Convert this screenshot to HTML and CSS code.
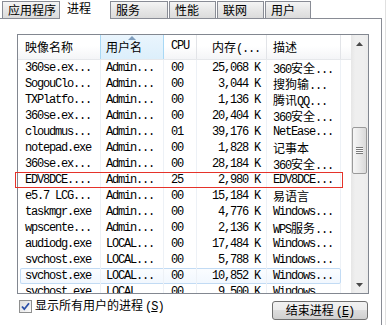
FILE: index.html
```html
<!DOCTYPE html>
<html lang="zh-CN">
<head>
<meta charset="utf-8">
<title>任务管理器 - 进程</title>
<link rel="stylesheet" href="styles.css">
</head>
<body>
<div class="window">
  <div class="tabs">
    <div class="tab t1">应用程序</div>
    <div class="tab active">进程</div>
    <div class="tab t3">服务</div>
    <div class="tab t4">性能</div>
    <div class="tab t5">联网</div>
    <div class="tab t6">用户</div>
  </div>
  <div class="panel">
    <div class="listview">
      <div class="lv-main">
        <div class="header">
          <div class="hc c1 pre">映像名称</div>
          <div class="hc c2 sorted"><span class="sort-arrow"></span>用户名</div>
          <div class="hc c3 mono">CPU</div>
          <div class="hc c4">内存<span class="mono">(...</span></div>
          <div class="hc c5">描述</div>
          <div class="hc cf"></div>
        </div>
        <div class="rows">
          <div class="row"><div class="c1">360se.ex...</div><div class="c2">Admin...</div><div class="c3">00</div><div class="c4">25,068 K</div><div class="c5">360<span class="cjk">安全</span>...</div></div>
          <div class="row"><div class="c1">SogouClo...</div><div class="c2">Admin...</div><div class="c3">00</div><div class="c4">3,044 K</div><div class="c5"><span class="cjk">搜狗输</span>...</div></div>
          <div class="row"><div class="c1">TXPlatfo...</div><div class="c2">Admin...</div><div class="c3">00</div><div class="c4">1,136 K</div><div class="c5"><span class="cjk">腾讯</span>QQ...</div></div>
          <div class="row"><div class="c1">360se.ex...</div><div class="c2">Admin...</div><div class="c3">00</div><div class="c4">20,404 K</div><div class="c5">360<span class="cjk">安全</span>...</div></div>
          <div class="row"><div class="c1">cloudmus...</div><div class="c2">Admin...</div><div class="c3">01</div><div class="c4">39,176 K</div><div class="c5">NetEase...</div></div>
          <div class="row"><div class="c1">notepad.exe</div><div class="c2">Admin...</div><div class="c3">00</div><div class="c4">1,828 K</div><div class="c5"><span class="cjk">记事本</span></div></div>
          <div class="row"><div class="c1">360se.ex...</div><div class="c2">Admin...</div><div class="c3">00</div><div class="c4">28,184 K</div><div class="c5">360<span class="cjk">安全</span>...</div></div>
          <div class="row"><div class="c1">EDV8DCE....</div><div class="c2">Admin...</div><div class="c3">25</div><div class="c4">2,980 K</div><div class="c5">EDV8DCE...</div></div>
          <div class="row"><div class="c1">e5.7 LCG...</div><div class="c2">Admin...</div><div class="c3">00</div><div class="c4">15,184 K</div><div class="c5"><span class="cjk">易语言</span></div></div>
          <div class="row"><div class="c1">taskmgr.exe</div><div class="c2">Admin...</div><div class="c3">00</div><div class="c4">4,776 K</div><div class="c5">Windows...</div></div>
          <div class="row"><div class="c1">wpscente...</div><div class="c2">Admin...</div><div class="c3">00</div><div class="c4">2,136 K</div><div class="c5">WPS<span class="cjk">服务</span>...</div></div>
          <div class="row"><div class="c1">audiodg.exe</div><div class="c2">LOCAL...</div><div class="c3">00</div><div class="c4">17,484 K</div><div class="c5">Windows...</div></div>
          <div class="row"><div class="c1">svchost.exe</div><div class="c2">LOCAL...</div><div class="c3">00</div><div class="c4">5,788 K</div><div class="c5">Windows...</div></div>
          <div class="row sel"><div class="c1">svchost.exe</div><div class="c2">LOCAL...</div><div class="c3">00</div><div class="c4">10,852 K</div><div class="c5">Windows...</div></div>
          <div class="row"><div class="c1">svchost.exe</div><div class="c2">LOCAL...</div><div class="c3">00</div><div class="c4">9,500 K</div><div class="c5">Windows...</div></div>
        </div>
      </div>
      <div class="vscroll">
        <div class="sb-btn"><svg width="7" height="4" viewBox="0 0 7 4"><path d="M3.5 0 L7 4 L0 4 Z" fill="#4a4a4a"/></svg></div>
        <div class="sb-track"><div class="thumb"><div class="grip"></div></div></div>
        <div class="sb-btn"><svg width="7" height="4" viewBox="0 0 7 4"><path d="M0 0 L7 0 L3.5 4 Z" fill="#4a4a4a"/></svg></div>
      </div>
    </div>
    <div class="bottom">
      <label class="chk">
        <span class="box"><svg width="11" height="11" viewBox="0 0 11 11"><path d="M2 5.5 L4.3 8.2 L9 2.2" fill="none" stroke="#2a4fa8" stroke-width="1.8"/></svg></span>
        <span class="chk-text">显示所有用户的进程<span class="acc">(<u>S</u>)</span></span>
      </label>
      <button class="btn">结束进程<span class="acc">(<u>E</u>)</span></button>
    </div>
    <div class="redbox"></div>
  </div>
</div>
</body>
</html>
```
FILE: styles.css
```css
* { box-sizing: border-box; }
body {
  margin: 0;
  width: 388px;
  height: 325px;
  overflow: hidden;
  background: #fff;
  color: #000;
  font-family: "Noto Sans CJK SC", sans-serif;
  font-size: 12px;
}
.window {
  width: 386px;
  height: 325px;
  border-right: 1px solid #e0e0e0;
}
.tabs {
  display: flex;
  align-items: flex-end;
  gap: 1px;
  height: 18px;
  padding-left: 2px;
  position: relative;
  z-index: 1;
}
.tab {
  height: 17px;
  border: 1px solid #898c95;
  border-bottom: none;
  background: linear-gradient(#f5f5f5, #e8e8e8 45%, #dbdbdb);
  padding-left: 5px;
  line-height: 15px;
  white-space: nowrap;
}
.t1 { width: 58px; }
.t3 { width: 58px; }
.t4 { width: 47px; }
.t5 { width: 47px; }
.t6 { width: 46px; }
.tab.active {
  width: 50px;
  height: 19px;
  margin: 0 -1px -1px -1px;
  border: none;
  background: #fff;
  padding-left: 7px;
  line-height: 16px;
}
.panel {
  position: relative;
  width: 382px;
  height: 307px;
  border-top: 1px solid #898c95;
  border-right: 1px solid #898c95;
  padding: 15px 0 0 17px;
}
.listview {
  display: flex;
  width: 352px;
  height: 260px;
  border: 1px solid #828790;
}
.lv-main {
  width: 333px;
  overflow: hidden;
}
.header {
  display: flex;
  height: 25px;
  background: linear-gradient(#ffffff, #ffffff 45%, #f4f5f7);
  border-bottom: 1px solid #e6e8eb;
}
.hc {
  height: 24px;
  line-height: 23px;
  border-right: 1px solid #e2e4e8;
  white-space: nowrap;
}
.hc.pre { border-right-color: #a8d8f5; }
.hc.sorted {
  position: relative;
  background: linear-gradient(#eaf5fd, #dcefFB);
  border-right-color: #a8d8f5;
}
.sort-arrow {
  position: absolute;
  top: 1px;
  left: 27px;
  width: 0;
  height: 0;
  border-left: 4px solid transparent;
  border-right: 4px solid transparent;
  border-bottom: 4px solid #7f9dbd;
}
.hc.cf { border-right: none; }
.mono {
  font-family: "Liberation Mono", monospace;
  letter-spacing: -1.2px;
}
.c1 { width: 83px; padding-left: 7px; }
.c2 { width: 63px; padding-left: 5px; }
.c3 { width: 33px; padding-left: 7px; }
.c4 { width: 70px; padding-right: 6px; text-align: right; }
.c5 { width: 74px; padding-left: 6px; }
.cf { width: 10px; }
.row {
  display: flex;
  width: 323px;
  height: 16px;
  line-height: 16px;
  font-family: "Liberation Mono", monospace;
  letter-spacing: -1.2px;
}
.row > div {
  height: 16px;
  white-space: nowrap;
  overflow: hidden;
  border-right: 1px solid #edf1f6;
}
.cjk {
  font-family: "Noto Sans CJK SC", sans-serif;
  letter-spacing: 0;
}
.row.sel {
  width: 321px;
  margin-left: 2px;
  background: linear-gradient(#fbfdff, #f1f7fe);
  box-shadow: inset 0 0 0 1px #c2dbf4;
  border-radius: 2px;
}
.row.sel .c1 { width: 81px; padding-left: 5px; }
.row.sel .c5 { border-right: none; }
.vscroll {
  width: 17px;
  display: flex;
  flex-direction: column;
  background: linear-gradient(90deg, #e6e6e6, #efefef 25%, #efefef 75%, #ebebeb);
}
.sb-btn {
  height: 17px;
  display: flex;
  align-items: center;
  justify-content: center;
}
.sb-track {
  flex: 1;
  padding-top: 75px;
}
.thumb {
  width: 15px;
  height: 47px;
  margin-left: 1px;
  border: 1px solid #9a9a9a;
  border-radius: 2px;
  background: linear-gradient(90deg, #f6f6f6, #e9e9e9 50%, #d9d9d9);
  display: flex;
  align-items: center;
  justify-content: center;
}
.grip {
  width: 7px;
  height: 7px;
  background: repeating-linear-gradient(#7a7a7a 0 1px, #fafafa 1px 2px);
}
.bottom {
  display: flex;
  justify-content: space-between;
  align-items: flex-start;
  padding: 0 13px 0 2px;
}
.chk {
  display: flex;
  align-items: center;
  gap: 3px;
  margin-top: 3px;
  height: 18px;
}
.chk-text {
  line-height: 18px;
}
.box {
  width: 13px;
  height: 13px;
  border: 1px solid #8e8f8f;
  background: linear-gradient(135deg, #dcdcdc, #fbfbfb);
  display: flex;
  align-items: center;
  justify-content: center;
}
.acc {
  font-family: "Liberation Mono", monospace;
  letter-spacing: -1px;
  margin-left: 2px;
}
.btn {
  margin-top: 7px;
  width: 96px;
  height: 19px;
  padding: 0;
  border: 1px solid #707070;
  border-radius: 3px;
  background: linear-gradient(#f2f2f2, #ebebeb 50%, #dddddd 50%, #cfcfcf);
  font-family: "Noto Sans CJK SC", sans-serif;
  font-size: 12px;
  line-height: 16px;
  color: #000;
}
.redbox {
  position: absolute;
  left: 15px;
  top: 153px;
  width: 328px;
  height: 16px;
  border: 1px solid #e5332a;
}
```
